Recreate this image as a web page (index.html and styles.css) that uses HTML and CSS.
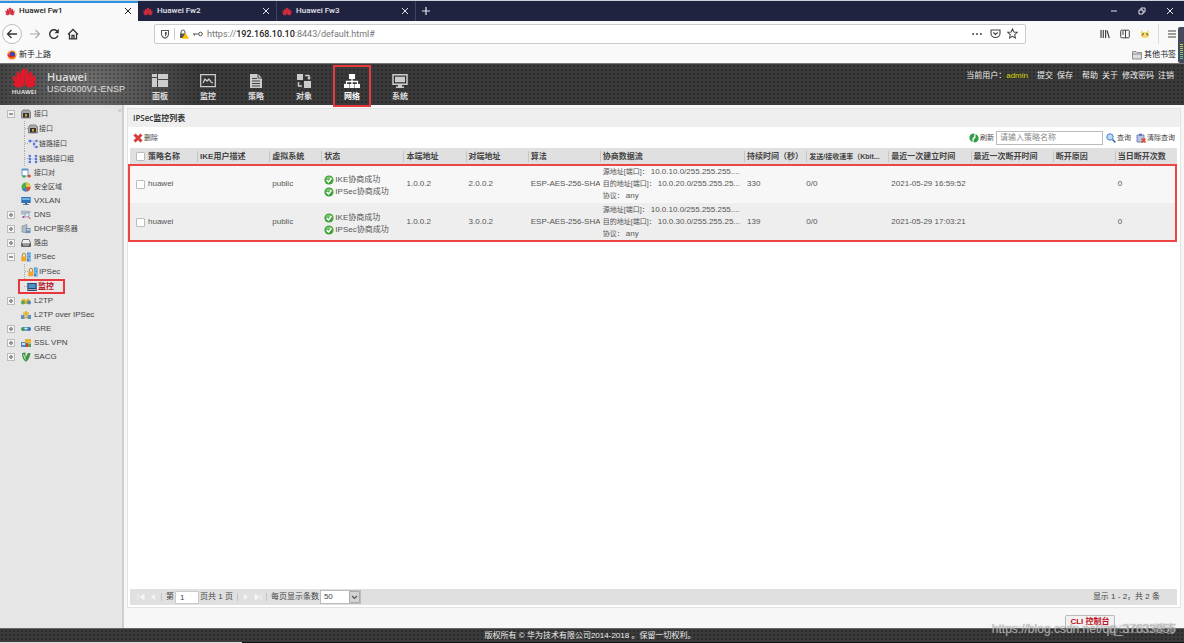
FILE: index.html
```html
<!DOCTYPE html>
<html lang="zh-CN">
<head>
<meta charset="utf-8">
<title>Huawei Fw1</title>
<link rel="stylesheet" href="styles.css">
</head>
<body>
<svg class="sprite" aria-hidden="true">
  <defs>
    <symbol id="petals" viewBox="0 0 26 20">
      <path d="M12.5 19C8 12 7.500 4 11 .500c1.300-.6 2 1 1.900 3ZM13.500 19C18 12 18.500 4 15 .500c-1.300-.6-2 1-1.900 3ZM11.500 19C5 14 3 8 5.500 3c2.500.5 5 8 6 16ZM14.500 19C21 14 23 8 20.500 3c-2.500.5-5 8-6 16ZM10.500 19C4 17.500 0 13 1.200 7.500 5 9.500 9 14 10.500 19ZM15.500 19C22 17.500 26 13 24.800 7.500 21 9.500 17 14 15.500 19ZM9.500 19.600C5 20.500 1.500 18.500 .800 15c4 .5 7 2.500 8.700 4.600ZM16.500 19.600c4.500.9 8-1.100 8.700-4.600-4 .5-7 2.500-8.700 4.600Z"/>
    </symbol>
    <symbol id="cross" viewBox="0 0 8 8"><path d="M1 1l6 6M7 1L1 7" fill="none" stroke="currentColor"/></symbol>
    <symbol id="ok" viewBox="0 0 10 10"><circle cx="5" cy="5" r="4.600" fill="#43a33d"/><path d="M1.500 4a3.700 3.700 0 0 1 7 0Z" fill="#7cc971"/><path d="M2.600 5l1.900 1.900 3-3.600" fill="none" stroke="#fff" stroke-width="1.500"/></symbol>
    <symbol id="port" viewBox="0 0 10 10"><path d="M.5 3L2 1h6l1.500 2v6h-9Z" fill="#aaa" stroke="#777" stroke-width=".8"/><path d="M2 4h6v4.500H2Z" fill="#333"/><path d="M4 5h2v2.500H4Z" fill="#d6a52e"/></symbol>
    <symbol id="link" viewBox="0 0 10 10"><path d="M2 2h4v6h2M6 5h2" fill="none" stroke="#9fb2e8"/><g fill="#5976dc"><circle cx="2" cy="2" r="1.500"/><circle cx="6" cy="5" r="1.200"/><circle cx="8.500" cy="2" r="1.300"/><circle cx="8.500" cy="8" r="1.300"/></g></symbol>
    <symbol id="linkgroup" viewBox="0 0 10 10"><path d="M2 1v8M8 1v8M2 5h6" fill="none" stroke="#b5c2ec"/><g fill="#5976dc"><circle cx="1.800" cy="2" r="1.300"/><circle cx="1.800" cy="5" r="1.300"/><circle cx="1.800" cy="8" r="1.300"/><circle cx="8" cy="2" r="1.300"/><circle cx="8" cy="5" r="1.300"/><circle cx="8" cy="8" r="1.300"/></g></symbol>
    <symbol id="pair" viewBox="0 0 10 10"><path d="M1 1h6v7H1Z" fill="#fff" stroke="#6a9ac8"/><path d="M1 1h6v1.500H1Z" fill="#5d93cc"/><circle cx="3" cy="8.500" r="1.300" fill="#35a843"/><circle cx="8.300" cy="8" r="1.600" fill="#e24b2b"/></symbol>
    <symbol id="zone" viewBox="0 0 10 10"><circle cx="5" cy="5" r="4.500" fill="#4bb04b"/><path d="M5 5V.5A4.500 4.500 0 0 1 9.500 5Z" fill="#e9c13a"/><path d="M5 5h4.500A4.500 4.500 0 0 1 6 9.400Z" fill="#dd4b39"/><path d="M5 5L6 9.400A4.500 4.500 0 0 1 1.200 7.500Z" fill="#4a7fd0"/></symbol>
    <symbol id="vx" viewBox="0 0 10 10"><path d="M.3 1h9.400v6H.3Z" fill="#2d72b8"/><path d="M1.200 2h7.600v2H1.200Z" fill="#6fb2e6"/><path d="M4 7h2v1.200h2V9H2v-.8h2Z" fill="#567"/></symbol>
    <symbol id="dns" viewBox="0 0 10 10"><path d="M.3 1h6v3h-6Z" fill="#bcc3cc" stroke="#8791a0" stroke-width=".5"/><circle cx="6" cy="5" r="2.200" fill="#dfeaf5" stroke="#6c8db5" stroke-width=".7"/><path d="M1.500 6h2v2h-2Z" fill="#b44b8c"/><path d="M7.500 6.500L9.300 9" stroke="#c84a36"/><path d="M7 1h2.500v2H7Z" fill="#aab"/></symbol>
    <symbol id="dhcp" viewBox="0 0 10 10"><path d="M1 2l5-1.500V9L1 8Z" fill="#b4bac1" stroke="#7d858e" stroke-width=".6"/><path d="M5 4h4.500v5H5Z" fill="#6e8faf"/><path d="M6 5h2.500v1.500H6Z" fill="#cfe1f0"/></symbol>
    <symbol id="route" viewBox="0 0 10 10"><path d="M2 1.500h6L9.500 5v3.500h-9V5Z" fill="#eee" stroke="#555" stroke-width=".8"/><path d="M.5 5.500h9v3h-9Z" fill="#555"/><path d="M2 6.500h6v1H2Z" fill="#ddd"/></symbol>
    <symbol id="lock" viewBox="0 0 10 10"><path d="M1.300 5V3a1.700 1.700 0 0 1 3.400 0v2" fill="none" stroke="#b08a2c"/><path d="M.3 4.500h5.200v4.800H.3Z" fill="#f0a52c"/><path d="M6 .5h3.600v9H6Z" fill="#3c8ed4"/><path d="M6 3h3.600M6 6h3.600M8 .5V3M7 3v3M8.500 6v3" stroke="#b5dcf7" stroke-width=".6"/></symbol>
    <symbol id="screen" viewBox="0 0 10 10"><path d="M.3 1h9.400v8H.3Z" fill="#27466b"/><path d="M1.500 2h7v4h-7Z" fill="#4f8fcb"/><path d="M1 7h8v1H1Z" fill="#9fb0bd"/></symbol>
    <symbol id="l2tp" viewBox="0 0 10 10"><path d="M0 6c1-4 4-4 5-1.500 1-3 4-2 5 1.500L8 8H2Z" fill="#e3b52d"/><circle cx="2" cy="6.500" r="2" fill="#5fa453"/><circle cx="8" cy="6.500" r="2" fill="#4f86bc"/></symbol>
    <symbol id="l2tpo" viewBox="0 0 10 10"><path d="M2 3.500h6M5 1v5" stroke="#e6b42a" stroke-width="2"/><path d="M0 5h3.500v4H0ZM6.500 5H10v4H6.500Z" fill="#5b90c6"/><path d="M3 7.500h4" stroke="#dba02d" stroke-width="1.500"/></symbol>
    <symbol id="gre" viewBox="0 0 10 10"><path d="M1.500 3h7v4h-7Z" fill="#6fa6d8"/><circle cx="1.900" cy="5" r="1.900" fill="#3f9a5a"/><circle cx="8.100" cy="5" r="1.900" fill="#3c76b5"/><path d="M3.500 4h3v1h-3Z" fill="#e4f0fa"/></symbol>
    <symbol id="ssl" viewBox="0 0 10 10"><path d="M0 4h7v5H0Z" fill="#5487bb"/><path d="M1 5h3v2H1Z" fill="#cce0f2"/><path d="M4 1h6v4H4Z" fill="#e7b432"/><path d="M5 5.500h2.500V9H5Z" fill="#cf3b2d"/><path d="M7.500 5.500H10V9H7.500Z" fill="#46a24b"/></symbol>
    <symbol id="sacg" viewBox="0 0 10 10"><path d="M1 1l3.500-.5v5L7 1h2.500C9 5 7.500 8 5 9.800 2 8 1 5 1 1Z" fill="#3f9445"/><path d="M2.500 2.500l2 5" stroke="#cfe8c9"/></symbol>
  </defs>
</svg>

<div class="window">
  <header class="tabs">
    <div class="tab current"><svg class="fav"><use href="#petals"/></svg><span>Huawei Fw1</span><button aria-label="关闭"><svg><use href="#cross"/></svg></button></div>
    <div class="tab"><svg class="fav"><use href="#petals"/></svg><span>Huawei Fw2</span><button aria-label="关闭"><svg><use href="#cross"/></svg></button></div>
    <div class="tab"><svg class="fav"><use href="#petals"/></svg><span>Huawei Fw3</span><button aria-label="关闭"><svg><use href="#cross"/></svg></button></div>
    <button class="newtab" aria-label="新标签"><svg viewBox="0 0 10 10"><path d="M5 1v8M1 5h8" fill="none" stroke="currentColor" stroke-width="1.200"/></svg></button>
    <div class="winctl">
      <button aria-label="最小化"><svg viewBox="0 0 8 8"><path d="M1 4h6" stroke="currentColor"/></svg></button>
      <button aria-label="还原"><svg viewBox="0 0 8 8"><path d="M1 3h4v4H1ZM3 3V1h4v4H5" fill="none" stroke="currentColor"/></svg></button>
      <button aria-label="关闭窗口"><svg><use href="#cross"/></svg></button>
    </div>
  </header>

  <div class="toolbar">
    <div class="navbtns">
      <button class="back" aria-label="后退"><svg viewBox="0 0 12 12"><path d="M11 6H1.500M5.500 2l-4 4 4 4" fill="none" stroke="#333" stroke-width="1.300"/></svg></button>
      <button aria-label="前进"><svg viewBox="0 0 12 12"><path d="M1 6h9.500M6.500 2l4 4-4 4" fill="none" stroke="#aaa" stroke-width="1.200"/></svg></button>
      <button aria-label="刷新页面"><svg viewBox="0 0 12 12"><path d="M10 7.500A4.300 4.300 0 1 1 9 3" fill="none" stroke="#333" stroke-width="1.400"/><path d="M10.800.8v4.400H6.500Z" fill="#333"/></svg></button>
      <button aria-label="主页"><svg viewBox="0 0 12 12"><path d="M1 6.500L6 1.500l5 5M2.500 6v4.800h7V6M5 10.500V7.500h2v3" fill="none" stroke="#333" stroke-width="1.300"/></svg></button>
    </div>
    <div class="urlbar">
      <svg viewBox="0 0 10 10"><path d="M1.500 1.500h7V5c0 2-1.500 3.500-3.500 4.300C3 8.500 1.500 7 1.500 5Z" fill="none" stroke="#555" stroke-width="1.100"/><path d="M5 3v4.500C6.500 6.500 6.800 5.500 6.800 3Z" fill="#555"/></svg>
      <i class="bar"></i>
      <svg viewBox="0 0 10 10"><path d="M2 5V3a2 2 0 0 1 4 0v2" fill="none" stroke="#555"/><path d="M1 4.500h6V9H1Z" fill="#555"/><path d="M6.500 3.800L10 9.700H3Z" fill="#ffbf00"/></svg>
      <svg viewBox="0 0 10 10"><path d="M0 5h5.500M1.500 5v1.500" fill="none" stroke="#555"/><circle cx="7.500" cy="5" r="1.800" fill="none" stroke="#555"/></svg>
      <span class="url">https://<b>192.168.10.10</b>:8443/default.html#</span>
      <svg class="dots" viewBox="0 0 10 10"><g fill="#444"><circle cx="1.200" cy="5" r="1"/><circle cx="5" cy="5" r="1"/><circle cx="8.800" cy="5" r="1"/></g></svg>
      <svg class="wide" viewBox="0 0 11 10"><path d="M1 1.500h9V5a4.500 4 0 0 1-9 0Z" fill="none" stroke="#444" stroke-width="1.100"/><path d="M3.300 4l2.200 2 2.200-2" fill="none" stroke="#444" stroke-width="1.200"/></svg>
      <svg class="wide" viewBox="0 0 12 12"><path d="M6 1l1.500 3.400 3.700.3-2.800 2.500.8 3.700L6 9l-3.200 1.900.8-3.700L.8 4.700l3.700-.3Z" fill="none" stroke="#444" stroke-width="1.100"/></svg>
    </div>
    <div class="tools">
      <svg viewBox="0 0 10 10"><path d="M1 1v8M3.300 1v8M5.600 1v8" stroke="#444" stroke-width="1.200"/><path d="M7 1.500L9.300 9" stroke="#444" stroke-width="1.200"/></svg>
      <svg viewBox="0 0 10 10"><rect x=".7" y="1.200" width="8.600" height="7.600" rx="1" fill="none" stroke="#444"/><path d="M5.500 1v8M2 3h2M2 5h2" stroke="#444"/></svg>
      <svg viewBox="0 0 10 10"><path d="M1 1l2 2h4l2-2v5L7.500 9h-5L1 6Z" fill="#f2df72"/><path d="M2 5h2M6 5h2" stroke="#543"/><path d="M1.500 6.500h1.500M7 6.500h1.500" stroke="#e76a4a"/></svg>
      <i class="bar"></i>
      <svg viewBox="0 0 10 10"><path d="M1 2h8M1 5h8M1 8h8" stroke="#444" stroke-width="1.100"/></svg>
    </div>
  </div>
  <div class="bookmarks">
    <a href="#"><svg viewBox="0 0 10 10"><circle cx="5" cy="5" r="4.500" fill="#ff8a16"/><circle cx="5.400" cy="4.500" r="2.800" fill="#4b3fb4"/><path d="M.7 3C2 6 5 7 8 5.500A4.500 4.500 0 0 1 .7 6Z" fill="#e8252b"/><path d="M7 .8a4.500 4.500 0 0 1 2 6C8.500 4 8 3 7 .8Z" fill="#ffd43a"/></svg>新手上路</a>
    <a href="#"><svg viewBox="0 0 10 10"><path d="M.5 9V1.500h3.500l1 1h4.500V9ZM.5 4h9" fill="#ddd" stroke="#777" stroke-width=".8"/></svg>其他书签</a>
  </div>
  <div class="meter" aria-hidden="true"><i></i></div>

  <div class="banner">
    <div class="brand">
      <div class="logo"><svg><use href="#petals"/></svg><b>HUAWEI</b></div>
      <div class="model"><b>Huawei</b><span>USG6000V1-ENSP</span></div>
    </div>
    <nav class="mainnav">
      <button><svg viewBox="0 0 16 16"><path d="M0 1h5v3H0ZM0 5h5v9H0ZM6 1h10v5H6ZM6 7h10v7H6Z" fill="#ccc"/></svg>面板</button>
      <button><svg viewBox="0 0 16 16"><path d="M.7 1.700h14.600v12H.7Z" fill="none" stroke="#ccc" stroke-width="1.300"/><path d="M3 10l2-4 2 2 2-2 2 3 2 1" fill="none" stroke="#ccc" stroke-width="1.300"/></svg>监控</button>
      <button><svg viewBox="0 0 16 16"><path d="M2 1h8l4 4v10H2Z" fill="#ccc"/><path d="M4 5.500h5M4 8h8M4 10.500h8M4 13h8M10 1v4h4" stroke="#444" fill="none"/></svg>策略</button>
      <button><svg viewBox="0 0 16 16"><path d="M1 1h6v6H1ZM8 8h7v7H8Z" fill="#ccc"/><path d="M9 2.500h4V6M2.500 9v4H6" fill="none" stroke="#ccc" stroke-width="1.500"/><path d="M11 4.500h4L13 7Z" fill="#ccc"/></svg>对象</button>
      <button class="active"><svg viewBox="0 0 16 16"><path d="M5 1h6v5H5ZM0 11h5v4H0ZM5.500 11h5v4h-5ZM11 11h5v4h-5Z" fill="#fff"/><path d="M8 5v6M2.500 11V8.500h11V11" fill="none" stroke="#fff" stroke-width="1.300"/></svg>网络</button>
      <button><svg viewBox="0 0 16 16"><path d="M1 1.700h14v9.600H1Z" fill="none" stroke="#ccc" stroke-width="1.500"/><path d="M3 3.700h10v5.600H3ZM6 12h4v1.500h2V15H4v-1.500h2Z" fill="#ccc"/></svg>系统</button>
    </nav>
    <div class="account">
      <span>当前用户：<b>admin</b></span>
      <span class="links"><a href="#">提交</a><a href="#">保存</a></span>
      <span class="links"><a href="#">帮助</a><a href="#">关于</a><a href="#">修改密码</a><a href="#">注销</a></span>
    </div>
  </div>

  <div class="body">
    <aside class="side">
      <button class="fold" aria-label="收起">«</button>
      <ul class="tree">
        <li><a href="#"><i class="box minus"></i><svg><use href="#port"/></svg>接口</a>
          <ul>
            <li><a href="#"><svg><use href="#port"/></svg>接口</a></li>
            <li><a href="#"><svg><use href="#link"/></svg>链路接口</a></li>
            <li><a href="#"><svg><use href="#linkgroup"/></svg>链路接口组</a></li>
          </ul>
        </li>
        <li><a href="#"><i class="box none"></i><svg><use href="#pair"/></svg>接口对</a></li>
        <li><a href="#"><i class="box none"></i><svg><use href="#zone"/></svg>安全区域</a></li>
        <li class="latin"><a href="#"><i class="box none"></i><svg><use href="#vx"/></svg>VXLAN</a></li>
        <li class="latin"><a href="#"><i class="box"></i><svg><use href="#dns"/></svg>DNS</a></li>
        <li><a href="#"><i class="box"></i><svg><use href="#dhcp"/></svg><span class="latin">DHCP</span>服务器</a></li>
        <li><a href="#"><i class="box"></i><svg><use href="#route"/></svg>路由</a></li>
        <li class="latin"><a href="#"><i class="box minus"></i><svg><use href="#lock"/></svg>IPSec</a>
          <ul>
            <li><a href="#"><svg><use href="#lock"/></svg>IPSec</a></li>
            <li class="chosen"><a href="#"><svg><use href="#screen"/></svg>监控</a></li>
          </ul>
        </li>
        <li class="latin"><a href="#"><i class="box"></i><svg><use href="#l2tp"/></svg>L2TP</a></li>
        <li class="latin"><a href="#"><i class="box none"></i><svg><use href="#l2tpo"/></svg>L2TP over IPSec</a></li>
        <li class="latin"><a href="#"><i class="box"></i><svg><use href="#gre"/></svg>GRE</a></li>
        <li class="latin"><a href="#"><i class="box"></i><svg><use href="#ssl"/></svg>SSL VPN</a></li>
        <li class="latin"><a href="#"><i class="box"></i><svg><use href="#sacg"/></svg>SACG</a></li>
      </ul>
    </aside>

    <main class="content">
      <section class="panel">
        <h1>IPSec监控列表</h1>
        <div class="actions">
          <button><svg viewBox="0 0 10 10"><path d="M1.500 1.500l7 7M8.500 1.500l-7 7" stroke="#d43b3b" stroke-width="3"/></svg>删除</button>
          <form class="search">
            <button type="button"><svg viewBox="0 0 10 10"><path d="M.5 3.500C1.500 1 4 0 5.500 1L5 4 3.500 5v4C1 8 0 6 .5 3.500ZM9.500 6.500C8.500 9 6 10 4.500 9L5 6l1.500-1V1C9 2 10 4 9.500 6.500Z" fill="#2f9d48"/></svg>刷新</button>
            <input type="text" aria-label="策略名称" placeholder="请输入策略名称">
            <button type="button" class="query"><svg viewBox="0 0 10 10"><circle cx="4" cy="4" r="3.200" fill="#b9dcf7" stroke="#4b83c6"/><path d="M6.500 6.500L9.300 9.300" stroke="#4b6fae" stroke-width="1.700"/></svg>查询</button>
            <button type="button"><svg viewBox="0 0 10 10"><path d="M1 2h7v7H1Z" fill="#b9c6ea" stroke="#5d6fae" stroke-width=".8"/><path d="M3 .7h3v2H3Z" fill="#5d6fae"/><path d="M5.500 5.500l4 4M9.500 5.500l-4 4" stroke="#e2482d" stroke-width="1.600"/></svg>清除查询</button>
          </form>
        </div>
        <div class="gridwrap">
          <table>
            <colgroup><col class="w15"><col class="w52"><col class="w72"><col class="w52"><col class="w82"><col class="w62"><col class="w62"><col class="w72"><col class="w144"><col class="w62"><col class="w82"><col class="w82"><col class="w82"><col class="w62"><col class="w62"></colgroup>
            <thead>
              <tr><th><input type="checkbox" aria-label="全选"></th><th class="plain">策略名称</th><th>IKE用户描述</th><th>虚拟系统</th><th>状态</th><th>本端地址</th><th>对端地址</th><th>算法</th><th>协商数据流</th><th>持续时间（秒）</th><th class="rate">发送/接收速率（Kbit...</th><th>最近一次建立时间</th><th>最近一次断开时间</th><th>断开原因</th><th>当日断开次数</th></tr>
            </thead>
            <tbody>
              <tr><td><input type="checkbox" aria-label="huawei 2.0.0.2"></td><td>huawei</td><td></td><td>public</td><td class="status"><p><svg><use href="#ok"/></svg>IKE协商成功</p><p><svg><use href="#ok"/></svg>IPSec协商成功</p></td><td>1.0.0.2</td><td>2.0.0.2</td><td class="clip">ESP-AES-256-SHA2</td><td class="flow"><p><span>源地址[端口]：</span>10.0.10.0/255.255.255....</p><p><span>目的地址[端口]：</span>10.0.20.0/255.255.25...</p><p><span>协议：</span>any</p></td><td>330</td><td class="tight">0/0</td><td>2021-05-29 16:59:52</td><td></td><td></td><td>0</td></tr>
              <tr><td><input type="checkbox" aria-label="huawei 3.0.0.2"></td><td>huawei</td><td></td><td>public</td><td class="status"><p><svg><use href="#ok"/></svg>IKE协商成功</p><p><svg><use href="#ok"/></svg>IPSec协商成功</p></td><td>1.0.0.2</td><td>3.0.0.2</td><td class="clip">ESP-AES-256-SHA2</td><td class="flow"><p><span>源地址[端口]：</span>10.0.10.0/255.255.255....</p><p><span>目的地址[端口]：</span>10.0.30.0/255.255.25...</p><p><span>协议：</span>any</p></td><td>139</td><td class="tight">0/0</td><td>2021-05-29 17:03:21</td><td></td><td></td><td>0</td></tr>
            </tbody>
          </table>
        </div>
        <div class="pager">
          <button disabled aria-label="首页"><svg viewBox="0 0 8 8"><path d="M1 1v6M7 1v6L3 4Z" fill="#f4f4f4" stroke="#f4f4f4"/></svg></button>
          <button disabled aria-label="上一页"><svg viewBox="0 0 8 8"><path d="M6 1v6L2 4Z" fill="#f4f4f4"/></svg></button>
          <i class="bar"></i>
          <label>第<input type="text" value="1"></label><span>页共 1 页</span>
          <i class="bar"></i>
          <button disabled aria-label="下一页"><svg viewBox="0 0 8 8"><path d="M2 1v6l4-3Z" fill="#f4f4f4"/></svg></button>
          <button disabled aria-label="末页"><svg viewBox="0 0 8 8"><path d="M7 1v6M1 1v6l4-3Z" fill="#f4f4f4" stroke="#f4f4f4"/></svg></button>
          <i class="bar"></i>
          <label>每页显示条数<span class="select"><select><option>50</option></select><svg viewBox="0 0 11 12"><path d="M.5.5h10v11H.5Z" fill="#d4d4d4" stroke="#aaa"/><path d="M3 5l2.500 2.500L8 5" fill="none" stroke="#555" stroke-width="1.200"/></svg></span></label>
          <span class="count">显示 1 - 2，共 2 条</span>
        </div>
      </section>
      <div class="dock"><button>CLI 控制台</button></div>
    </main>
  </div>

  <footer class="foot">版权所有 © 华为技术有限公司2014-2018 。保留一切权利。</footer>
  <div class="edge"></div>
  <span class="mark">https://blog.csdn.net/qq_37633855</span>
  <span class="mark second">@51CTO博客</span>
</div>
</body>
</html>
```
FILE: styles.css
```css
* { box-sizing: border-box; }
body { margin: 0; background: #f7f7f7; color: #444; font: 8px/12px "Liberation Sans", "Noto Sans CJK SC", sans-serif; }
button { border: 0; padding: 0; background: none; color: inherit; font: inherit; display: flex; align-items: center; }
input, select { font: inherit; color: inherit; margin: 0; }
a { color: inherit; text-decoration: none; }
p, h1, ul { margin: 0; padding: 0; }
ul { list-style: none; }
svg { width: 10px; height: 10px; flex: none; display: block; }
.sprite { position: absolute; width: 0; height: 0; }
.window { position: relative; display: flex; flex-direction: column; height: 100vh; overflow: hidden; }
.bar { flex: none; width: 1px; height: 12px; background: #ccc; }

/* browser chrome */
.tabs { display: flex; height: 21px; flex: none; background: #202340; border-top: 1px solid #c8d4da; color: #e4e4ec; font-family: Roboto, sans-serif; }
.tab { display: flex; align-items: center; gap: 4px; width: 139px; padding: 0 6px 0 5px; border-right: 1px solid #41445f; }
.tab span { flex: 1; font-weight: 500; }
.tab.current { background: #f9f9fa; color: #222; box-shadow: inset 0 2px #2f8fe0; border-right: 0; width: 138px; }
.tab svg { width: 8px; height: 8px; }
.tab .fav { width: 10px; height: 9px; fill: #d42c3c; }
.newtab { width: 20px; justify-content: center; }
.winctl { margin-left: auto; display: flex; align-items: center; gap: 20px; padding-right: 10px; }
.winctl svg { width: 8px; height: 8px; }
.toolbar { display: flex; align-items: center; height: 25px; flex: none; background: #f9f9fa; }
.navbtns { display: flex; align-items: center; gap: 8px; width: 154px; padding-left: 2px; }
.navbtns svg { width: 12px; height: 12px; }
.navbtns .back { width: 20px; height: 20px; border: 1px solid #bbb; border-radius: 50%; justify-content: center; background: #fff; }
.navbtns button + button { margin-left: -1px; }
.urlbar { display: flex; align-items: center; gap: 4px; height: 20px; padding: 0 5px; border: 1px solid #ccc; background: #fff; border-radius: 2px; flex: 0 1 872px; }
.url { flex: 1; color: #777; font: 9px/14px Roboto, sans-serif; }
.url b { color: #222; font-weight: 500; }
.urlbar .dots { margin-right: 4px; }
.urlbar .wide { width: 11px; height: 11px; margin-right: 2px; }
.tools { margin-left: auto; display: flex; align-items: center; gap: 10px; padding-right: 7px; }
.tools .bar { height: 20px; background: #ddd; margin: 0 -2px; }
.bookmarks { display: flex; justify-content: space-between; align-items: center; height: 17px; flex: none; padding: 0 8px 0 7px; background: #f9f9fa; color: #222; }
.bookmarks a { display: flex; align-items: center; gap: 2px; }
.meter { position: absolute; right: 0; top: 27px; width: 6px; height: 36px; background: #444a59; border-radius: 2px 0 0 2px; padding: 17px 1px 3px 2px; }
.meter i { display: block; height: 100%; background: repeating-linear-gradient(transparent 0 1px, #444a59 1px 2px), linear-gradient(#d8d34c, #42c4a4); }

/* product banner */
.banner { display: flex; flex: none; height: 42px; border-top: 1px solid #777; color: #ddd; background: radial-gradient(circle, #00000040 1px, transparent 1px) 0 0 / 4px 4px, radial-gradient(110px 90px at 88px 20px, #707070, #3a3a3a); }
.brand { display: flex; gap: 9px; width: 136px; padding-left: 10px; }
.logo { display: flex; flex-direction: column; align-items: center; width: 28px; padding-top: 4px; font: 6px/8px "Open Sans", sans-serif; }
.logo svg { width: 25px; height: 20px; fill: #e0192b; }
.model { display: flex; flex-direction: column; padding-top: 6px; font: 9px/13px "Liberation Sans", sans-serif; white-space: nowrap; }
.model b { font: 600 11px/13px "Open Sans", sans-serif; }
.mainnav { display: flex; gap: 10px; padding: 1px 5px 0; }
.mainnav button { flex-direction: column; gap: 1px; width: 38px; height: 42px; padding-top: 8px; font-weight: 700; line-height: 13px; position: relative; }
.mainnav svg { width: 16px; height: 16px; }
.mainnav .active { border: 2px solid #e8383d; padding-top: 6px; color: #fff; }
.account { margin-left: auto; display: flex; gap: 9px; height: 12px; margin-top: 6px; padding-right: 10px; color: #eee; white-space: nowrap; }
.account b { color: #d6d600; font-weight: 400; }
.account .links { display: flex; gap: 4px; }

/* tree */
.body { display: flex; flex: 1; min-height: 0; }
.side { position: relative; width: 124px; flex: none; padding: 2px 0 0 7px; background: #e6e6e6; border-right: 2px solid #cfcfcf; }
.fold { position: absolute; right: 0; top: 0; color: #bbb; }
.tree { font-size: 7px; }
.tree a { display: flex; align-items: center; height: 14px; white-space: nowrap; }
.tree svg { margin: 0 3px 0 6px; }
.tree .latin { font-size: 8px; }
.box { width: 8px; height: 8px; border: 1px solid #bbb; background: linear-gradient(#999, #999) center / 4px 2px no-repeat, linear-gradient(#999, #999) center / 2px 4px no-repeat, #f4f4f4; }
.box.minus { background: linear-gradient(#999, #999) center / 4px 2px no-repeat, #f4f4f4; }
.box.none { visibility: hidden; }
.tree ul { margin-left: 17px; }
.tree ul li { border-left: 1px dotted #aaa; }
.tree ul a { height: 15px; }
.tree ul svg { margin: 0 1px 0 3px; }
.tree ul a::before { content: ""; width: 3px; margin-right: -3px; border-top: 1px dotted #aaa; }
.tree .chosen { margin-left: -6px; width: 47px; padding-left: 4px; border: 2px solid #e8383d; color: #b80f1b; font-weight: 700; }
.tree .chosen a { height: 11px; }

/* list panel */
.content { flex: 1; min-width: 0; display: flex; flex-direction: column; padding: 3px 3px 0; }
.panel { flex: 1; display: flex; flex-direction: column; min-height: 0; padding-bottom: 2px; border: 1px solid #e3e3e3; background: #fff; }
.panel h1 { padding: 1px 5px 0; height: 18px; background: #efefef; color: #333; font: 600 8px/16px "Open Sans", "Noto Sans CJK SC", sans-serif; }
.actions { display: flex; justify-content: space-between; align-items: center; height: 21px; padding: 0 5px; }
.actions button { gap: 1px; font-size: 7px; }
.search { display: flex; align-items: center; gap: 2px; }
.search input { width: 107px; height: 14px; padding: 0 3px; border: 1px solid #bbb; background: #fff; }
.search input::placeholder { color: #888; }
.search .query { margin: 0 3px 0 1px; }
.gridwrap { position: relative; margin: 0 3px 0 2px; }
.gridwrap::after { content: ""; position: absolute; inset: 16px 0 -1px -2px; border: 2px solid #ef4444; pointer-events: none; }
table { width: 100%; table-layout: fixed; border-collapse: collapse; }
.w15 { width: 15px; } .w52 { width: 52px; } .w62 { width: 62px; } .w72 { width: 72px; } .w82 { width: 82px; } .w144 { width: 144px; }
th, td { padding: 0 0 0 3px; text-align: left; white-space: nowrap; overflow: hidden; text-overflow: ellipsis; }
th { height: 17px; color: #444; background: linear-gradient(#c6c6c6, #c6c6c6) 0 center / 1px 11px no-repeat, #e0e0e0; }
th:first-child, th.plain { background: #e0e0e0; }
th.rate { font-size: 7px; }
td { height: 38px; line-height: 12px; background: #f7f7f7; color: #555; }
tr:nth-child(2) td { background: #eee; }
th:first-child, td:first-child { padding-left: 6px; }
td.clip { text-overflow: clip; }
td.tight { padding-left: 0; }
td p { line-height: 12px; }
.status { padding-top: 4px; }
.status p { display: flex; align-items: center; gap: 1px; }
.flow span { font-size: 7px; margin-right: 2px; }
input[type="checkbox"] { appearance: none; display: block; width: 9px; height: 9px; border: 1px solid #bbb; border-radius: 1px; background: #fff; }
.pager { display: flex; align-items: center; gap: 4px; height: 16px; margin: auto 3px 0 2px; padding: 0 17px 0 7px; background: #e0e0e0; }
.pager svg { width: 8px; height: 8px; }
.pager .bar { height: 8px; background: #c4c4c4; }
.pager label { display: flex; align-items: center; gap: 1px; }
.pager label + span { margin-left: -3px; }
.pager input { width: 24px; height: 13px; padding: 0 4px; border: 1px solid #ccc; background: #fff; }
.select { position: relative; width: 41px; height: 14px; }
.select select { appearance: none; width: 100%; height: 100%; padding: 0 3px; border: 1px solid #bbb; border-radius: 0; background: #fff; display: block; }
.pager .select svg { position: absolute; right: 1px; top: 1px; width: 11px; height: 12px; pointer-events: none; }
.pager .count { margin-left: auto; }
.dock { display: flex; justify-content: flex-end; align-items: flex-end; height: 20px; flex: none; padding-right: 66px; }
.dock button { width: 50px; height: 13px; justify-content: center; border: 1px solid #bbb; border-bottom: 0; border-radius: 2px 2px 0 0; background: #f1f1f1; color: #c0101c; font-weight: 700; white-space: nowrap; }
.foot { flex: none; height: 14px; line-height: 14px; padding-right: 4px; text-align: center; color: #eee; background: radial-gradient(circle, #00000040 1px, transparent 1px) 0 0 / 4px 4px, #3a3a3a; border-top: 1px solid #666; }
.edge { flex: none; height: 1px; background: linear-gradient(90deg, #ddd 242px, #111 242px); }
.mark { position: absolute; right: 8px; bottom: 6px; color: #c4c4c4; opacity: .8; font: 12px/16px "Liberation Sans", sans-serif; white-space: nowrap; text-shadow: 0 0 1px #777; }
.mark.second { font: 11px/16px "Liberation Sans", "Noto Sans CJK SC", sans-serif; opacity: .5; }
```
